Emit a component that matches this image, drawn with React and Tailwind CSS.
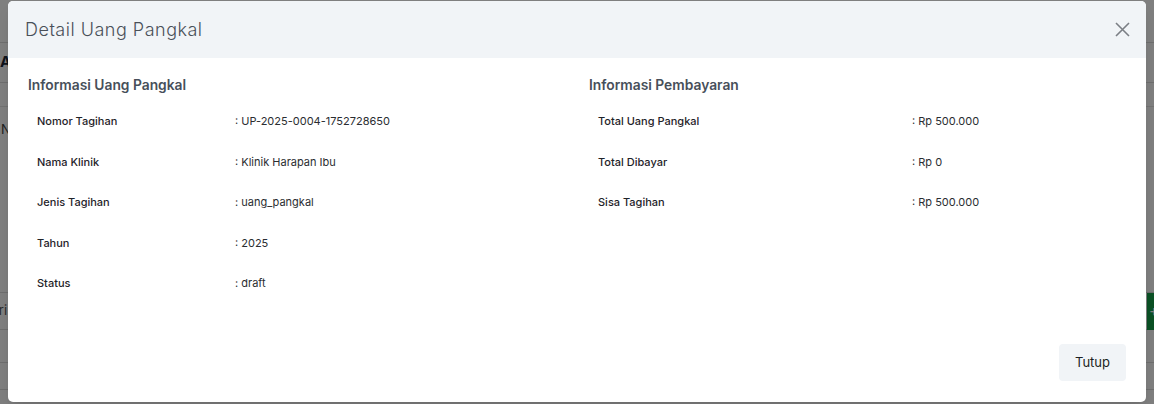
import React from 'react';

const uangPangkal = [
  ['Nomor Tagihan', 'UP-2025-0004-1752728650'],
  ['Nama Klinik', 'Klinik Harapan Ibu'],
  ['Jenis Tagihan', 'uang_pangkal'],
  ['Tahun', '2025'],
  ['Status', 'draft'],
];

const pembayaran = [
  ['Total Uang Pangkal', 'Rp 500.000'],
  ['Total Dibayar', 'Rp 0'],
  ['Sisa Tagihan', 'Rp 500.000'],
];

function InfoTable({ title, rows, labelWidth }) {
  return (
    <div className="flex flex-col">
      <h4 className="text-[13.8px] leading-5 font-semibold text-[#474f5a]">{title}</h4>
      <div className="mt-[6px] flex flex-col">
        {rows.map(([label, value]) => (
          <div key={label} className="flex items-center h-[40.5px] pl-[9px] text-[11px]">
            <span className={`${labelWidth} shrink-0 font-medium text-[#1f2329]`}>{label}</span>
            <span className="text-[#2a2d31]">: {value}</span>
          </div>
        ))}
      </div>
    </div>
  );
}

export default function App() {
  return (
    <div className="relative w-[1154px] h-[404px] overflow-hidden bg-white" style={{ fontFamily: 'Inter, "Noto Sans", sans-serif' }}>
      {/* page underneath */}
      <div className="flex flex-col text-[#1f2937]">
        <div className="h-[43px] border-b border-[#dcdcdc]"></div>
        <div className="h-[40px] border-b border-[#dcdcdc] flex items-center">
          <span className="text-[15px] font-bold">Administrasi</span>
        </div>
        <div className="h-[24px] border-b border-[#e5e5e5]"></div>
        <div className="h-[45px] flex items-center justify-between text-[13px] text-[#444]">
          <span className="ml-[1px]">No</span>
          <span className="mr-[-30px]">Edit</span>
        </div>
        <div className="h-[141px] border-b border-[#dcdcdc]"></div>
        <div className="h-[37px] flex items-center justify-between border-b border-[#dcdcdc]">
          <span className="ml-[-18px] text-[13px] text-[#555]">Cari</span>
          <span className="h-[37px] w-[40px] mr-[-33px] bg-[#16a34a] text-white flex items-center pl-[2px] text-[15px]">+</span>
        </div>
        <div className="h-[33px] border-b border-[#dcdcdc]"></div>
        <div className="h-[27px] border-b border-[#dcdcdc]"></div>
      </div>

      {/* backdrop */}
      <div className="absolute inset-0 bg-black/50"></div>

      {/* modal */}
      <div className="absolute left-[8px] top-[1px] w-[1138px] h-[401px] bg-white rounded-[5px] overflow-hidden flex flex-col shadow-lg">
        <div className="h-[57px] shrink-0 bg-[#f1f4f7] flex items-center justify-between pl-[17px] pr-[15px]">
          <h3 className="text-[18px] font-light text-[#4a5059] tracking-[0.5px]">Detail Uang Pangkal</h3>
          <button className="text-[#7b7f85] w-[18px] h-[18px] flex items-center justify-center">
            <svg width="15" height="15" viewBox="0 0 15 15" fill="none" stroke="currentColor" strokeWidth="1.6">
              <path d="M1 1L14 14M14 1L1 14" />
            </svg>
          </button>
        </div>

        <div className="flex-1 px-5 pt-[17px] grid grid-cols-2 gap-6">
          <InfoTable title="Informasi Uang Pangkal" rows={uangPangkal} labelWidth="w-[198px]" />
          <InfoTable title="Informasi Pembayaran" rows={pembayaran} labelWidth="w-[314px]" />
        </div>

        <div className="flex justify-end pr-5 pb-[21px]">
          <button className="w-[67px] h-[37px] rounded-[4px] bg-[#f1f4f7] text-[13px] text-[#1c1f23]">Tutup</button>
        </div>
      </div>
    </div>
  );
}
